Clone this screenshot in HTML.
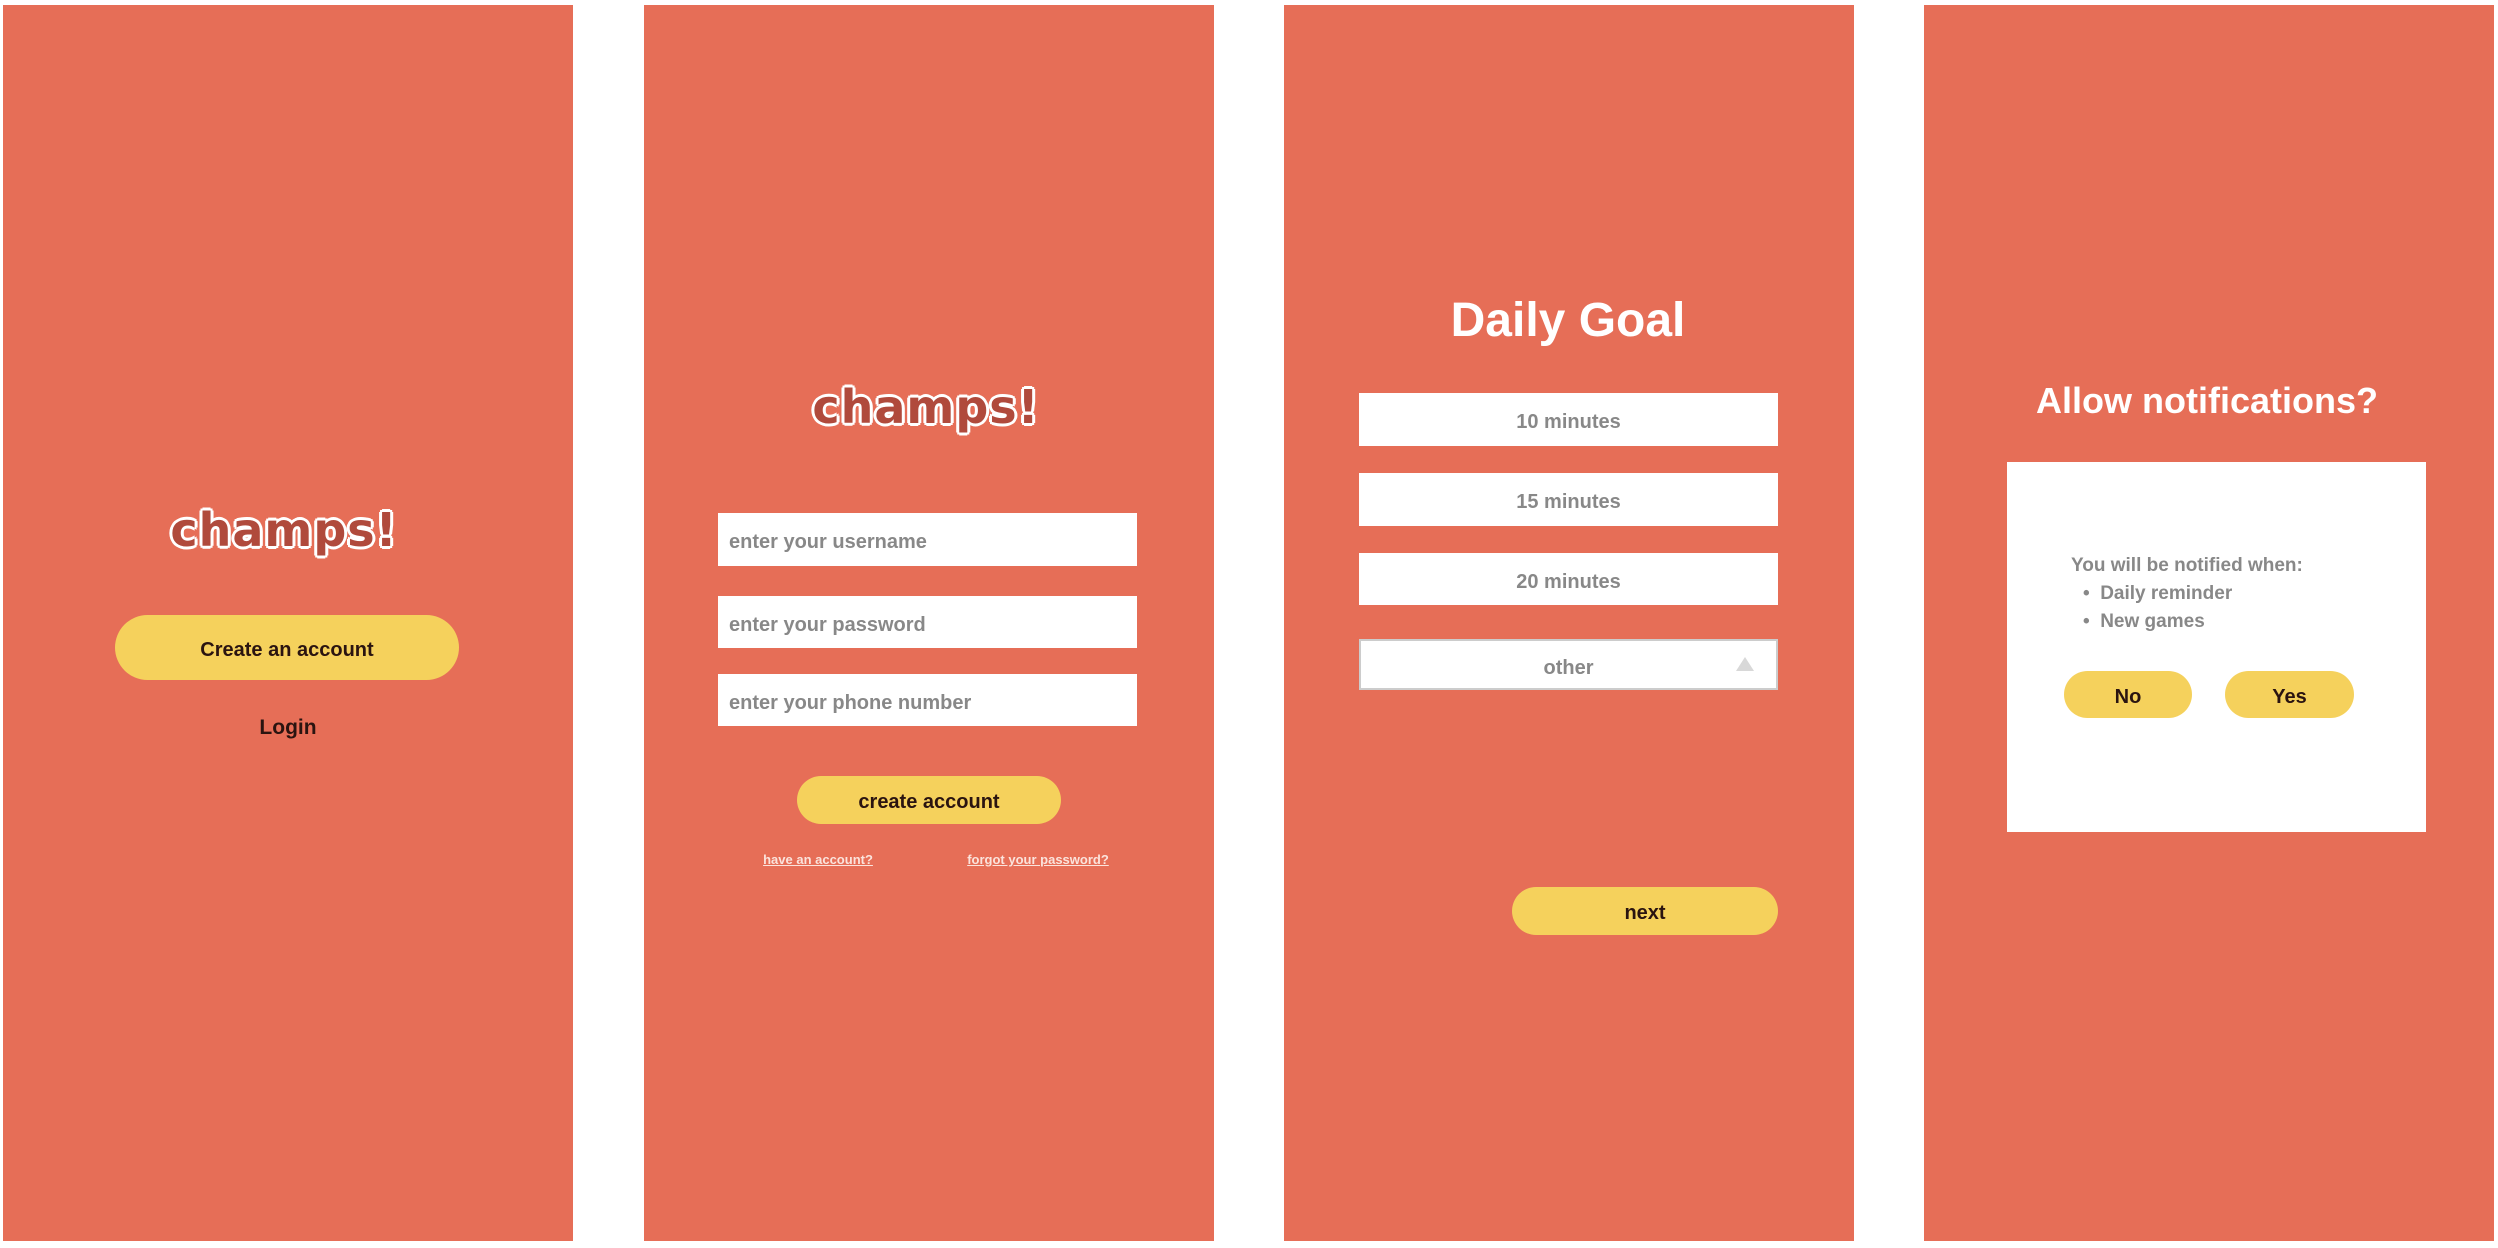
<!DOCTYPE html>
<html><head><meta charset="utf-8"><style>
*{margin:0;padding:0;box-sizing:border-box}
body{width:2498px;height:1248px;background:#fff;position:relative;overflow:hidden;font-family:"Liberation Sans",sans-serif}
.p{position:absolute;top:5px;width:570px;height:1236px;background:#e66e57}
.a{position:absolute}
.logo{position:absolute;font-family:"DejaVu Sans",sans-serif;font-weight:bold;font-size:46px;color:#b04a3c;letter-spacing:1px;transform:translate(-50%,-50%);white-space:nowrap;
text-shadow:3px 0 #fff,-3px 0 #fff,0 3px #fff,0 -3px #fff,2px 2px #fff,-2px -2px #fff,2px -2px #fff,-2px 2px #fff}
.btn{position:absolute;background:#f5d15c;border-radius:40px;display:flex;align-items:center;justify-content:center;font-weight:bold;color:#2a1410;font-size:20px;padding-top:5px}
.in{position:absolute;background:#fff;display:flex;align-items:center;color:#888;font-size:20px;font-weight:bold;padding-top:6px}
.c{justify-content:center}
.t{position:absolute;transform:translateX(-50%);white-space:nowrap;font-weight:bold}
</style></head><body>
<div class="p" style="left:3px"></div>
<div class="p" style="left:644px"></div>
<div class="p" style="left:1284px"></div>
<div class="p" style="left:1924px"></div>

<div class="logo" style="left:284px;top:530px">champs!</div>
<div class="btn" style="left:115px;top:615px;width:344px;height:65px">Create an account</div>
<div class="t" style="left:288px;top:716px;font-size:21px;color:#2a1410">Login</div>

<div class="logo" style="left:926px;top:407px">champs!</div>
<div class="in" style="left:718px;top:513px;width:419px;height:53px;padding-left:11px">enter your username</div>
<div class="in" style="left:718px;top:596px;width:419px;height:52px;padding-left:11px">enter your password</div>
<div class="in" style="left:718px;top:674px;width:419px;height:52px;padding-left:11px">enter your phone number</div>
<div class="btn" style="left:797px;top:776px;width:264px;height:48px">create account</div>
<div class="t" style="left:818px;top:852px;font-size:13px;color:#fbe3dc;text-decoration:underline">have an account?</div>
<div class="t" style="left:1038px;top:852px;font-size:13px;color:#fbe3dc;text-decoration:underline">forgot your password?</div>

<div class="t" style="left:1568px;top:293px;font-size:48px;color:#fff">Daily Goal</div>
<div class="in c" style="left:1359px;top:393px;width:419px;height:53px">10 minutes</div>
<div class="in c" style="left:1359px;top:473px;width:419px;height:53px">15 minutes</div>
<div class="in c" style="left:1359px;top:553px;width:419px;height:52px">20 minutes</div>
<div class="in c" style="left:1359px;top:639px;width:419px;height:51px;border:2px solid #ccc;padding-top:8px">other
<div class="a" style="right:22px;top:16px;width:0;height:0;border-left:9px solid transparent;border-right:9px solid transparent;border-bottom:14px solid #d8d8d8"></div></div>
<div class="btn" style="left:1512px;top:887px;width:266px;height:48px">next</div>

<div class="t" style="left:2207px;top:380px;font-size:36px;color:#fff">Allow notifications?</div>
<div class="a" style="left:2007px;top:462px;width:419px;height:370px;background:#fff"></div>
<div class="a" style="left:2071px;top:552px;font-size:19px;font-weight:bold;color:#888;line-height:28px">You will be notified when:<br>
<span style="padding-left:12px">•&nbsp;&nbsp;Daily reminder</span><br><span style="padding-left:12px">•&nbsp;&nbsp;New games</span></div>
<div class="btn" style="left:2064px;top:671px;width:128px;height:47px">No</div>
<div class="btn" style="left:2225px;top:671px;width:129px;height:47px">Yes</div>
</body></html>
